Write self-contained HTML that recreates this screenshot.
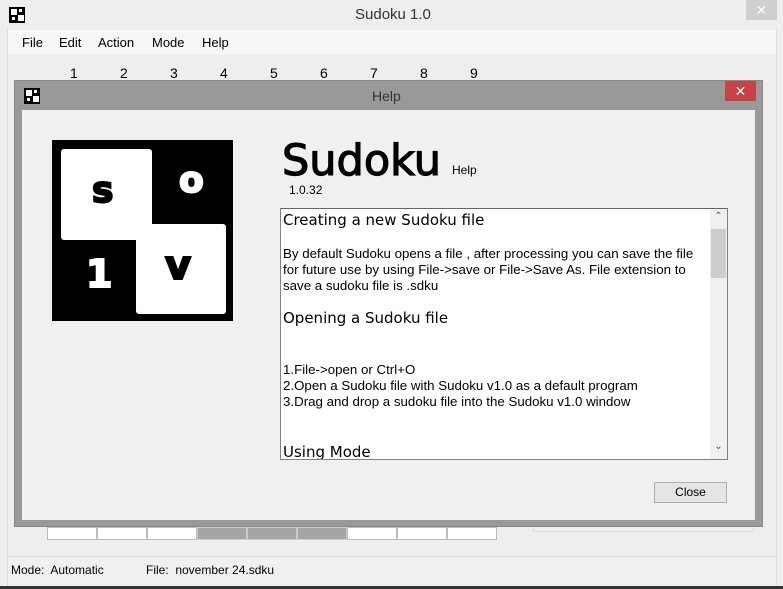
<!DOCTYPE html>
<html><head><style>
*{margin:0;padding:0;box-sizing:border-box}
body{width:783px;height:589px;background:#eeeeee;font-family:"Liberation Sans",Arial,sans-serif;position:relative;overflow:hidden;font-size:13px;color:#000}
.a{position:absolute}
.ico{position:absolute;width:16px;height:16px;background:#000}
.ico i{position:absolute;width:6px;height:6px;background:#fff}
.c{position:absolute;top:527px;width:50px;height:13px;background:#fff;border:1px solid #bbb}
.g{background:#a5a5a5;border-color:#ccc}
</style></head><body>
<div class="ico" style="left:9px;top:7px"><i style="left:2px;top:2px"></i><i style="left:9px;top:8px"></i><i style="left:10px;top:2px;width:3px;height:3px"></i><i style="left:3px;top:10px;width:3px;height:3px"></i></div>
<div class="a" style="left:355px;top:6px;font-size:15px;color:#333">Sudoku 1.0</div>
<div class="a" style="left:746px;top:0;width:31px;height:20px;background:#cfcfcf;color:#fff;text-align:center;font-size:14px;line-height:20px">✕</div>
<div class="a" style="left:7px;top:29px;width:770px;height:560px;border-left:1px solid #ddd;border-right:1px solid #ddd"></div>
<div class="a" style="left:8px;top:30px;width:768px;height:24px;background:#f7f7f7"></div>
<div class="a" style="left:22px;top:35px">File</div>
<div class="a" style="left:59px;top:35px">Edit</div>
<div class="a" style="left:98px;top:35px">Action</div>
<div class="a" style="left:152px;top:35px">Mode</div>
<div class="a" style="left:202px;top:35px">Help</div>
<div class="a" style="left:70px;top:65px;font-size:14px">
<span class="a" style="left:0">1</span><span class="a" style="left:50px">2</span><span class="a" style="left:100px">3</span><span class="a" style="left:150px">4</span><span class="a" style="left:200px">5</span><span class="a" style="left:250px">6</span><span class="a" style="left:300px">7</span><span class="a" style="left:350px">8</span><span class="a" style="left:400px">9</span></div>
<div class="c" style="left:47px"></div><div class="c" style="left:97px"></div><div class="c" style="left:147px"></div>
<div class="c g" style="left:197px"></div><div class="c g" style="left:247px"></div><div class="c g" style="left:297px"></div>
<div class="c" style="left:347px"></div><div class="c" style="left:397px"></div><div class="c" style="left:447px"></div>
<div class="a" style="left:533px;top:527px;width:221px;height:5px;border:1px solid #ddd;border-top:none"></div>
<div class="a" style="left:8px;top:556px;width:768px;height:28px;border-top:1px solid #ddd;background:#f0f0f0"></div>
<div class="a" style="left:11px;top:563px;font-size:12px">Mode:&nbsp; Automatic</div>
<div class="a" style="left:146px;top:563px;font-size:12px">File:&nbsp; november 24.sdku</div>
<div class="a" style="left:0;top:586px;width:783px;height:3px;background:#333"></div>
<div class="a" style="left:14px;top:80px;width:749px;height:447px;background:#999;border:1px solid #888"></div>
<div class="ico" style="left:24px;top:88px"><i style="left:2px;top:2px"></i><i style="left:9px;top:8px"></i><i style="left:10px;top:2px;width:3px;height:3px"></i><i style="left:3px;top:10px;width:3px;height:3px"></i></div>
<div class="a" style="left:372px;top:88px;font-size:14px;color:#333">Help</div>
<div class="a" style="left:725px;top:81px;width:31px;height:20px;background:#c74343;color:#fff;text-align:center;font-size:14px;line-height:20px">✕</div>
<div class="a" style="left:22px;top:110px;width:733px;height:410px;background:#f0f0f0"></div>
<div class="a" style="left:52px;top:140px;width:181px;height:181px;background:#000"></div>
<div class="a" style="left:61px;top:149px;width:91px;height:91px;background:#fff;border-radius:3px"></div>
<div class="a" style="left:136px;top:224px;width:90px;height:90px;background:#fff;border-radius:3px"></div>
<div class="a" style="left:92px;top:170px;font:bold 36px 'DejaVu Sans',sans-serif;-webkit-text-stroke:2px #000">s</div>
<div class="a" style="left:179px;top:160px;font:bold 36px 'DejaVu Sans',sans-serif;color:#fff;-webkit-text-stroke:2px #fff">o</div>
<div class="a" style="left:86px;top:252px;font:bold 38px 'DejaVu Sans',sans-serif;color:#fff;-webkit-text-stroke:2px #fff">1</div>
<div class="a" style="left:165px;top:243px;font:bold 40px 'DejaVu Sans',sans-serif;-webkit-text-stroke:2px #000">v</div>
<div class="a" style="left:282px;top:136px;font:43px 'DejaVu Sans',sans-serif;-webkit-text-stroke:1.2px #000">Sudoku</div>
<div class="a" style="left:452px;top:163px;font-size:12px">Help</div>
<div class="a" style="left:289px;top:183px;font-size:12px">1.0.32</div>
<div class="a" style="left:280px;top:208px;width:448px;height:252px;background:#fff;border:1px solid #828282;border-top-color:#666;overflow:hidden">
<div class="a" style="left:429px;top:0;width:17px;height:252px;background:#f0f0f0"></div>
<div class="a" style="left:430px;top:20px;width:15px;height:49px;background:#cdcdcd"></div>
<div class="a" style="left:430px;top:2px;width:15px;font-size:10px;color:#555;text-align:center">&#8963;</div>
<div class="a" style="left:430px;top:232px;width:15px;font-size:10px;color:#555;text-align:center">&#8964;</div>
<div class="a" style="left:2px;top:2px;font:15px 'DejaVu Sans',sans-serif">Creating a new Sudoku file</div>
<div class="a" style="left:2px;top:37px;font-size:13.3px;line-height:16px;width:425px">By default Sudoku opens a file , after processing you can save the file for future use by using File-&gt;save or File-&gt;Save As. File extension to save a sudoku file is .sdku</div>
<div class="a" style="left:2px;top:100px;font:15px 'DejaVu Sans',sans-serif">Opening a Sudoku file</div>
<div class="a" style="left:2px;top:153px;font-size:13.3px;line-height:16px">1.File-&gt;open or Ctrl+O<br>2.Open a Sudoku file with Sudoku v1.0 as a default program<br>3.Drag and drop a sudoku file into the Sudoku v1.0 window</div>
<div class="a" style="left:2px;top:234px;font:15px 'DejaVu Sans',sans-serif">Using Mode</div>
</div>
<div class="a" style="left:654px;top:482px;width:73px;height:21px;background:#e5e5e5;border:1px solid #adadad;text-align:center;line-height:19px;font-size:12px">Close</div>
</body></html>
